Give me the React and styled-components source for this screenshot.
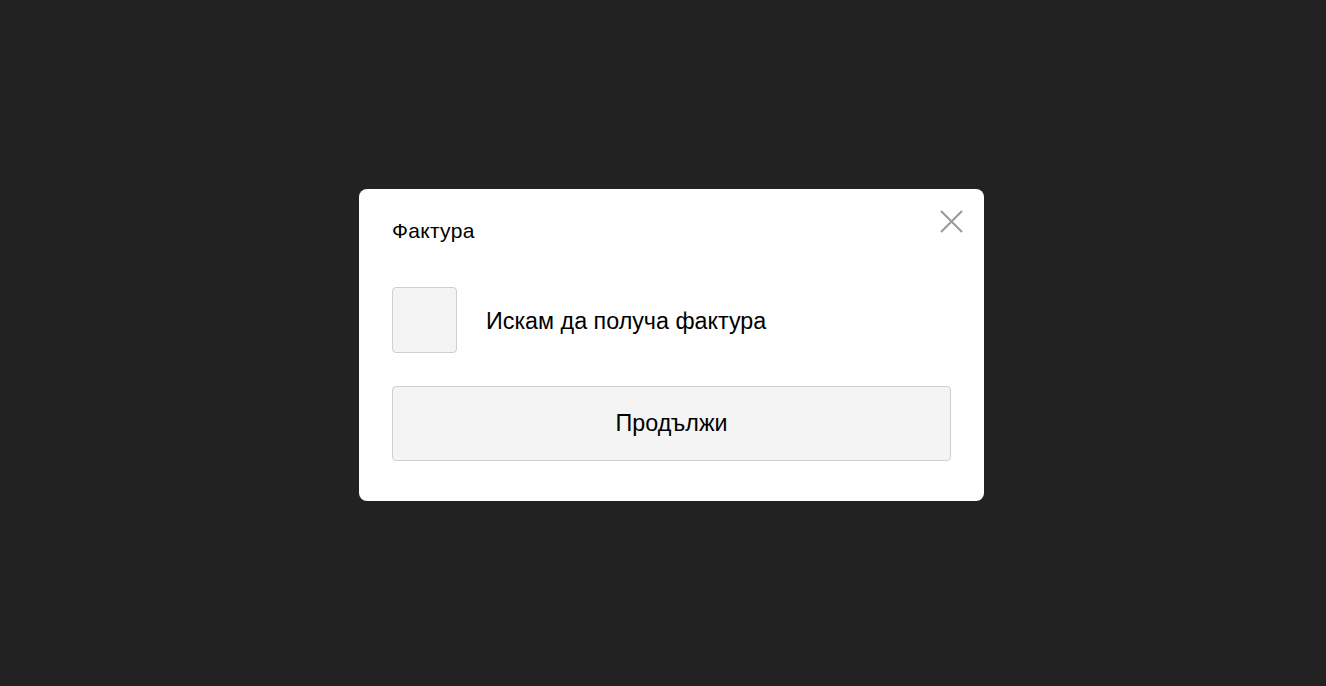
import React from "react";
import styled, { createGlobalStyle } from "styled-components";

const GlobalStyle = createGlobalStyle`
  html, body {
    margin: 0;
    padding: 0;
    background: #222222;
  }
  body {
    font-family: "Liberation Sans", Arial, sans-serif;
  }
`;

const Overlay = styled.div`
  width: 100vw;
  height: 100vh;
  box-sizing: border-box;
  padding: 4px 0 0 17px;
  display: flex;
  align-items: center;
  justify-content: center;
  background: #222222;
`;

const Modal = styled.div`
  position: relative;
  width: 625px;
  box-sizing: border-box;
  padding: 29px 33px 40px;
  background: #ffffff;
  border-radius: 8px;
  display: flex;
  flex-direction: column;
`;

const Title = styled.div`
  font-size: 21px;
  line-height: 26px;
  letter-spacing: 0.3px;
  color: #000;
`;

const CloseButton = styled.button`
  position: absolute;
  top: 21px;
  right: 21px;
  width: 23px;
  height: 23px;
  padding: 0;
  border: none;
  background: none;
  cursor: pointer;
  display: flex;
`;

const CheckRow = styled.label`
  margin-top: 43px;
  display: flex;
  align-items: center;
  gap: 29px;
  cursor: pointer;
`;

const Box = styled.span`
  width: 65px;
  height: 66px;
  box-sizing: border-box;
  border: 1px solid #cfcfcf;
  border-radius: 4px;
  background: #f4f4f4;
  flex-shrink: 0;
`;

const LabelText = styled.span`
  font-size: 23.3px;
  padding-top: 2px;
  color: #000;
`;

const ContinueButton = styled.button`
  margin-top: 33px;
  height: 75px;
  width: 100%;
  border: 1px solid #cfcfcf;
  border-radius: 4px;
  background: #f4f4f4;
  font-family: "Liberation Sans", Arial, sans-serif;
  font-size: 23.3px;
  color: #000;
  cursor: pointer;
`;

export default function App() {
  return (
    <>
      <GlobalStyle />
      <Overlay>
        <Modal>
          <CloseButton aria-label="Затвори">
            <svg width="23" height="23" viewBox="0 0 23 23">
              <path d="M1 1 L22 22 M22 1 L1 22" stroke="#999" strokeWidth="2" fill="none" />
            </svg>
          </CloseButton>
          <Title>Фактура</Title>
          <CheckRow>
            <Box />
            <LabelText>Искам да получа фактура</LabelText>
          </CheckRow>
          <ContinueButton>Продължи</ContinueButton>
        </Modal>
      </Overlay>
    </>
  );
}
